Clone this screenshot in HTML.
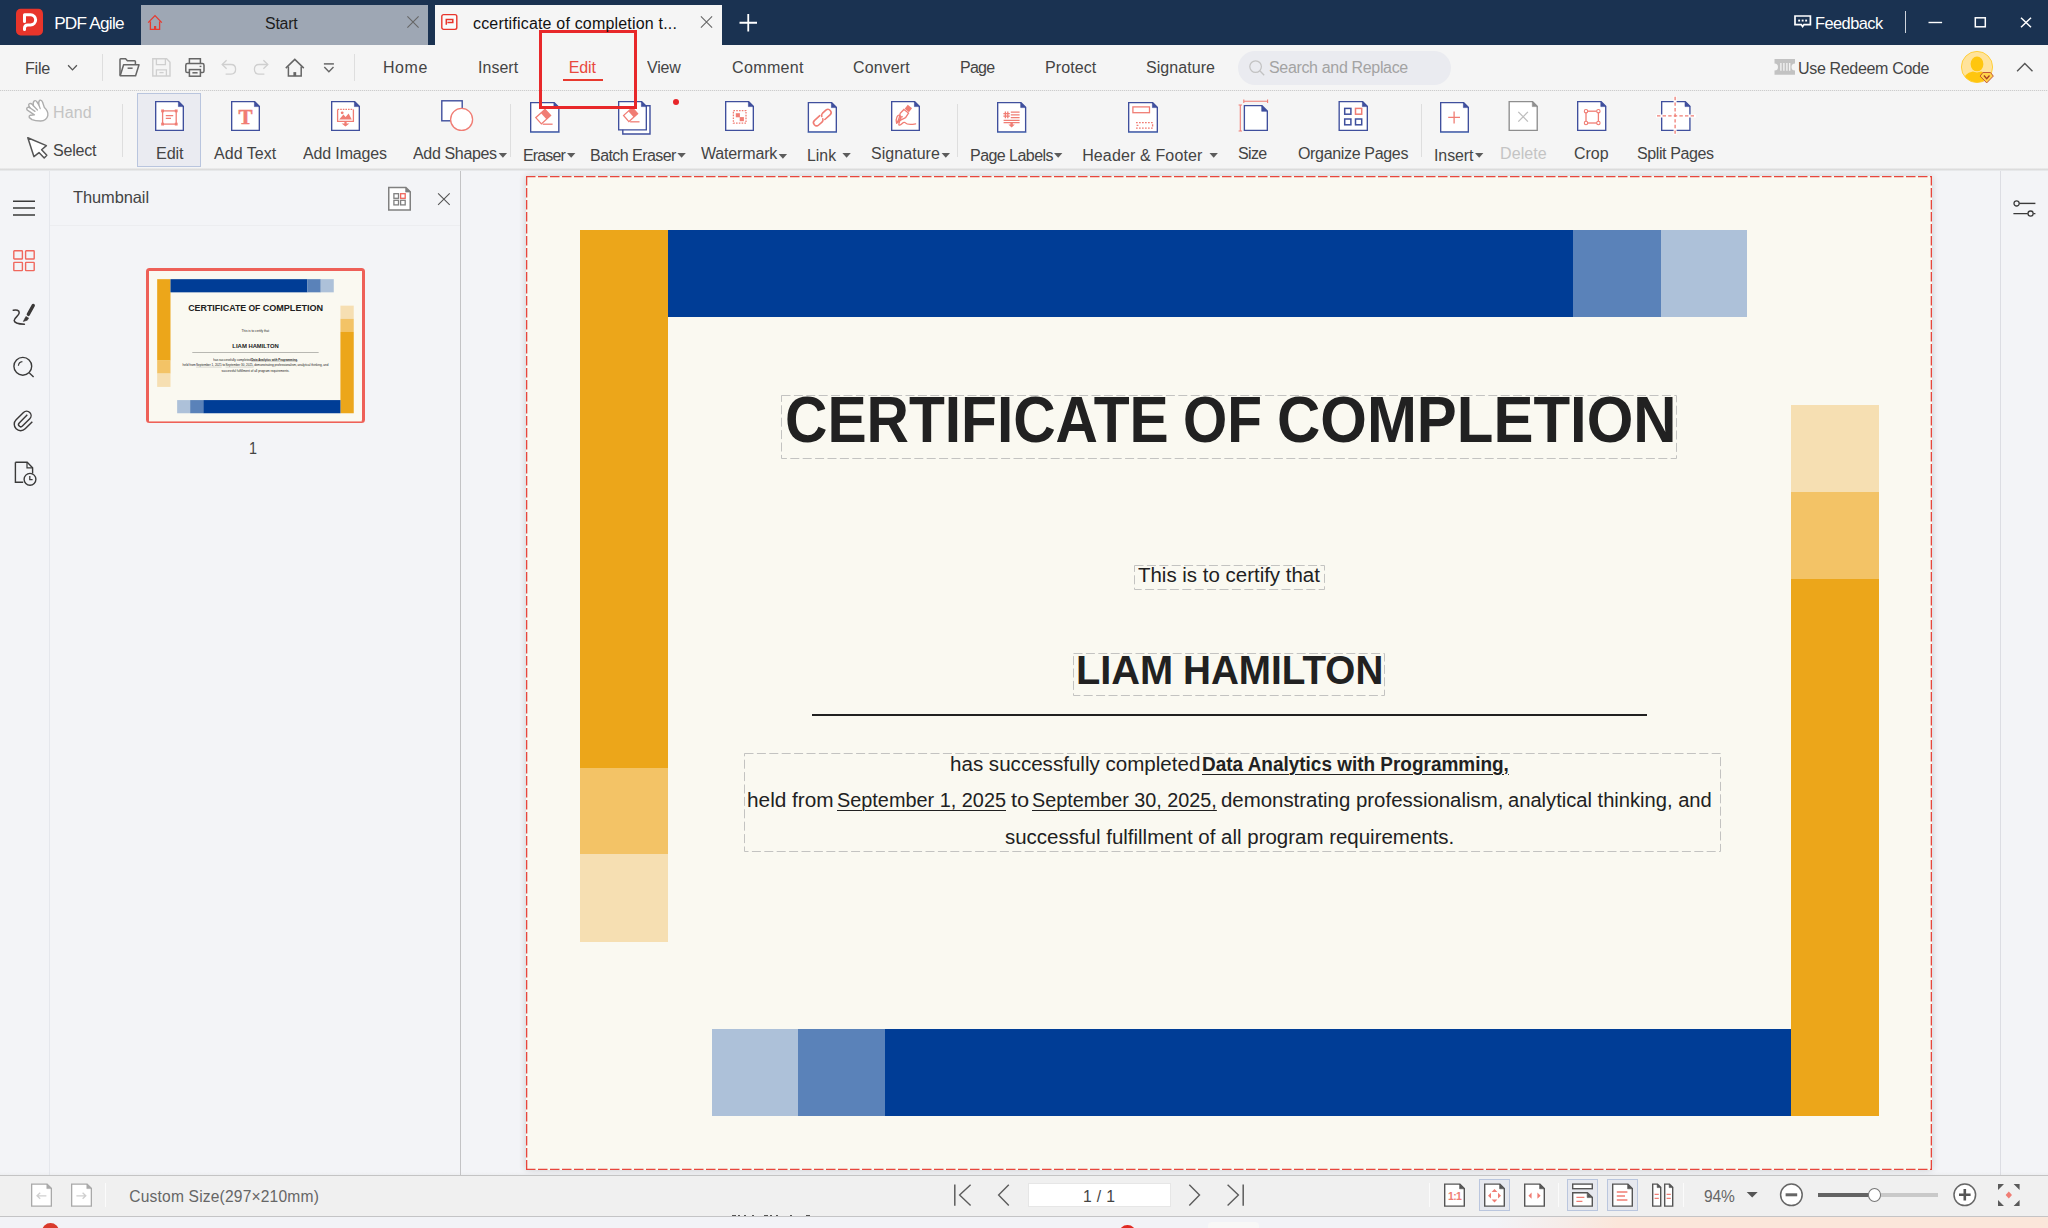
<!DOCTYPE html><html><head><meta charset="utf-8"><title>PDF Agile</title><style>
*{box-sizing:border-box}
html,body{margin:0;padding:0}
body{width:2048px;height:1228px;overflow:hidden;position:relative;background:#f3f4f7;font-family:"Liberation Sans",sans-serif;}
.a{position:absolute}
.t{position:absolute;white-space:pre;transform-origin:0 0;font-family:"Liberation Sans",sans-serif}
.sep{position:absolute;width:1px;background:#dedede}
u{text-decoration-thickness:1px;text-underline-offset:2.5px}
.db{position:absolute;border:1px dashed #bfbfbf}
</style></head><body>
<div class="a" style="left:0;top:0;width:2048px;height:45px;background:#1a3251"></div>
<div class="a" style="left:141px;top:5px;width:287px;height:40px;background:#9ea7b4"></div>
<div class="a" style="left:435px;top:5px;width:287px;height:40px;background:#f5f5f5"></div>
<svg style="position:absolute;left:16px;top:8px;overflow:visible;" width="27" height="28"><g transform="translate(0,0.8)"><rect x="0" y="0" width="27" height="26.6" rx="4.6" fill="#e8352b"/><path d="M8.5,12.6 V6 H14.6 A5.05,5.05 0 0 1 14.6,16.1 H11.8 Q8.5,16.1 8.5,19.4 V20.6" fill="none" stroke="#fff" stroke-width="3" stroke-linecap="round" stroke-linejoin="round"/></g></svg>
<svg style="position:absolute;left:147px;top:14px;overflow:visible;" width="16" height="17"><path d="M1.2,8.6 L8,1.6 L14.8,8.6 M3.4,7.4 V15.4 H12.6 V7.4" fill="none" stroke="#e8392e" stroke-width="1.3" stroke-linejoin="miter"/><rect x="7" y="12" width="2.2" height="3" fill="#e8392e"/></svg>
<svg style="position:absolute;left:407px;top:16px;overflow:visible;" width="12" height="12"><path d="M0.4,0.4 L11.6,11.6 M11.6,0.4 L0.4,11.6" stroke="#666" stroke-width="1.1" fill="none"/></svg>
<svg style="position:absolute;left:700px;top:16px;overflow:visible;" width="13" height="12"><g transform="translate(0.5,0)"><path d="M0.4,0.4 L11.6,11.6 M11.6,0.4 L0.4,11.6" stroke="#666" stroke-width="1.1" fill="none"/></g></svg>
<svg style="position:absolute;left:441px;top:13px;overflow:visible;" width="17" height="18"><g transform="translate(0,0.8)"><rect x="0.8" y="0.8" width="15" height="14.8" rx="1.8" fill="#fafcfc" stroke="#e8352b" stroke-width="1.4"/><path d="M5.3,11 V5.7 H11.8 V8.7 H6.4" fill="none" stroke="#e8352b" stroke-width="1.5"/></g></svg>
<svg style="position:absolute;left:739px;top:14px;overflow:visible;" width="18" height="18"><g transform="translate(0.5,0)"><path d="M0,8.75 H17.5 M8.75,0 V17.5" stroke="#fff" stroke-width="1.8"/></g></svg>
<svg style="position:absolute;left:1794px;top:15px;overflow:visible;" width="18" height="14"><path d="M1,1 H16.4 V9.6 H10 L8.6,11.6 L7.2,9.6 H1 Z" fill="none" stroke="#fff" stroke-width="1.7" stroke-linejoin="miter"/><rect x="4.2" y="4.6" width="1.9" height="1.9" fill="#fff"/><rect x="7.7" y="4.6" width="1.9" height="1.9" fill="#fff"/><rect x="11.2" y="4.6" width="1.9" height="1.9" fill="#fff"/></svg>
<div class="a" style="left:1905px;top:11px;width:1px;height:22px;background:#cfd4dc"></div>
<svg style="position:absolute;left:1928px;top:21px;overflow:visible;" width="15" height="3"><g transform="translate(0.5,0.5)"><path d="M0,1 H13.6" stroke="#fff" stroke-width="1.4"/></g></svg>
<svg style="position:absolute;left:1974px;top:17px;overflow:visible;" width="13" height="11"><g transform="translate(0.5,0)"><rect x="0.8" y="0.8" width="10" height="9" fill="none" stroke="#fff" stroke-width="1.5"/></g></svg>
<svg style="position:absolute;left:2020px;top:17px;overflow:visible;" width="12" height="11"><g transform="translate(0.5,0.3)"><path d="M0.5,0.5 L10.5,10 M10.5,0.5 L0.5,10" stroke="#fff" stroke-width="1.5" fill="none"/></g></svg>
<div class="a" style="left:0;top:45px;width:2048px;height:45px;background:#f5f5f5"></div>
<div class="a" style="left:0;top:90px;width:2048px;height:1px;background:repeating-linear-gradient(90deg,#cdcdcd 0 1px,#ececec 1px 2px)"></div>
<div class="a" style="left:0;top:91px;width:2048px;height:77px;background:#f5f5f5"></div>
<div class="a" style="left:0;top:168px;width:2048px;height:3px;background:linear-gradient(#efefef,#dcdcdc 50%,#eceef1)"></div>
<svg style="position:absolute;left:67px;top:64px;overflow:visible;" width="11" height="7"><g transform="translate(0.5,0.5)"><path d="M0.6,0.8 L5,5.4 L9.4,0.8" fill="none" stroke="#555" stroke-width="1.3"/></g></svg>
<div class="sep" style="left:102px;top:54px;height:27px"></div>
<div class="sep" style="left:354px;top:54px;height:27px"></div>
<svg style="position:absolute;left:119px;top:58px;overflow:visible;" width="21" height="19"><path d="M1,17.6 V1.6 Q1,0.8 1.8,0.8 H6.6 L8.4,2.8 H15.6 Q16.4,2.8 16.4,3.6 V6.6" fill="none" stroke="#666" stroke-width="1.5"/><path d="M1.2,17.8 L4.6,6.8 H20 L16.6,17.8 Z" fill="none" stroke="#666" stroke-width="1.5" stroke-linejoin="round"/><path d="M8.6,10.2 H13.6" stroke="#666" stroke-width="1.5"/></svg>
<svg style="position:absolute;left:152px;top:58px;overflow:visible;" width="19" height="19"><path d="M0.8,0.8 H14.6 L18,4.2 V18 H0.8 Z" fill="none" stroke="#cfcfcf" stroke-width="1.4"/><path d="M4.4,1 V6.6 H13.4 V1" fill="none" stroke="#cfcfcf" stroke-width="1.3"/><path d="M4.4,18 V11.8 H14.4 V18" fill="none" stroke="#cfcfcf" stroke-width="1.3"/><path d="M7.4,14.6 H11.6" stroke="#cfcfcf" stroke-width="1.3"/></svg>
<svg style="position:absolute;left:185px;top:58px;overflow:visible;" width="20" height="19"><path d="M4.4,5.4 V0.8 H15.4 V5.4" fill="none" stroke="#666" stroke-width="1.5"/><rect x="0.8" y="5.6" width="18.2" height="9" rx="1.6" fill="none" stroke="#666" stroke-width="1.5"/><rect x="4.4" y="11.6" width="11" height="6.6" fill="#f5f5f5" stroke="#666" stroke-width="1.5"/><path d="M7.4,14.8 H12.6" stroke="#666" stroke-width="1.5"/><path d="M14.6,8.4 H16.4" stroke="#666" stroke-width="1.4"/></svg>
<svg style="position:absolute;left:221px;top:59px;overflow:visible;" width="16" height="17"><g transform="translate(0,0.5)"><path d="M5.6,0.8 L1.2,5 L5.6,9.2" fill="none" stroke="#cfcfcf" stroke-width="1.3"/><path d="M1.6,5 H10 Q14.6,5 14.6,9.8 Q14.6,14.6 10,14.6 H4.6" fill="none" stroke="#cfcfcf" stroke-width="1.3"/></g></svg>
<svg style="position:absolute;left:253px;top:59px;overflow:visible;" width="16" height="17"><g transform="translate(0,0.5)"><path d="M10.4,0.8 L14.8,5 L10.4,9.2" fill="none" stroke="#cfcfcf" stroke-width="1.3"/><path d="M14.4,5 H6 Q1.4,5 1.4,9.8 Q1.4,14.6 6,14.6 H11.4" fill="none" stroke="#cfcfcf" stroke-width="1.3"/></g></svg>
<svg style="position:absolute;left:285px;top:58px;overflow:visible;" width="20" height="19"><g transform="translate(0,0.5)"><path d="M0.8,9.6 L9.8,0.9 L18.8,9.6" fill="none" stroke="#666" stroke-width="1.5" stroke-linejoin="miter"/><path d="M3.4,8 V17.6 H16.2 V8" fill="none" stroke="#666" stroke-width="1.5"/><rect x="8.4" y="13.6" width="2.8" height="4" fill="#666"/></g></svg>
<svg style="position:absolute;left:323px;top:63px;overflow:visible;" width="12" height="10"><g transform="translate(0.5,0)"><path d="M0.4,0.9 H10.4" stroke="#666" stroke-width="1.5"/><path d="M0.8,4 L5.4,8.8 L10,4" fill="none" stroke="#666" stroke-width="1.4"/></g></svg>
<div class="a" style="left:563px;top:78.5px;width:40px;height:2.6px;background:#e8392e"></div>
<div class="a" style="left:1238px;top:50.5px;width:213px;height:34px;border-radius:17px;background:#eaebf0"></div>
<svg style="position:absolute;left:1249px;top:60px;overflow:visible;" width="16" height="16"><circle cx="6.6" cy="6.6" r="5.8" fill="none" stroke="#c2c2c2" stroke-width="1.2"/><path d="M10.8,10.8 L15.2,15.2" stroke="#c2c2c2" stroke-width="1.3"/></svg>
<svg style="position:absolute;left:1774px;top:59px;overflow:visible;" width="21" height="16"><g transform="translate(0.5,0)"><path d="M0,0 H20.5 V4.4 A3.5,3.5 0 0 0 20.5,11.4 V15.8 H0 V11.4 A3.5,3.5 0 0 0 0,4.4 Z" fill="#c2c2c2"/><path d="M6.4,4 V11.8 M9.4,4 V11.8 M12.4,4 V11.8 M15.2,4 V11.8" stroke="#f5f5f5" stroke-width="1.3"/></g></svg>
<svg style="position:absolute;left:1960px;top:50px;overflow:visible;" width="34" height="34"><g transform="translate(0.5,0.5)"><circle cx="16.5" cy="16.5" r="15.6" fill="#ffe39b" stroke="#ffcf3d" stroke-width="1"/><clipPath id="av"><circle cx="16.5" cy="16.5" r="15.2"/></clipPath><g clip-path="url(#av)"><ellipse cx="16.5" cy="13.4" rx="6.4" ry="7.4" fill="#ffc60f"/><path d="M2,33 Q3,22.4 12.4,21 L16.5,22 L20.6,21 Q30,22.4 31,33 Z" fill="#ffc60f"/></g><path d="M19.6,25.6 L22.4,22 H30 L32.8,25.6 L26.2,32.4 Z" fill="#ffd24a" stroke="#c2573a" stroke-width="1"/><path d="M23.4,25 L26.2,28.2 L29,25" fill="none" stroke="#a83a22" stroke-width="1.3"/></g></svg>
<svg style="position:absolute;left:2016px;top:62px;overflow:visible;" width="18" height="10"><g transform="translate(0.5,0.5)"><path d="M0.6,8.8 L8.3,1 L16,8.8" fill="none" stroke="#555" stroke-width="1.4"/></g></svg>
<svg style="position:absolute;left:0px;top:92px;overflow:visible;" width="64" height="40"><path d="M29.4,25.6 Q28.6,23.8 30.6,23.2 L34.4,22.8 L27.4,18.2 Q26,16.6 27.4,15.6 Q28.6,14.8 30.2,16 L29.2,14.4 Q28,12.4 29.6,11.6 Q31,11 32.4,12.6 L33.4,13.8 Q32.6,10.2 34.4,8.8 Q36,8.2 37,10 L38.8,12.8 Q38.4,9 40,8.2 Q41.8,7.8 42.6,10.2 L44.4,15.6 Q48.6,19.6 47.8,23.6 Q46.6,28.6 40.6,29 Q35,29 32,27.6 Z" fill="#fff" stroke="#adadad" stroke-width="1.4" stroke-linejoin="round"/><path d="M30.2,16 L35,19.4 M33.4,13.8 L37.4,18 M38.8,12.8 L40.2,16.6" fill="none" stroke="#adadad" stroke-width="1.3" stroke-linecap="round"/></svg>
<svg style="position:absolute;left:0px;top:130px;overflow:visible;" width="64" height="34"><path d="M27.8,7.8 L46.4,15.6 L41.6,19.8 L46.8,25.2 L44.2,28 L39,22.6 L33.9,26.6 Z" fill="#fff" stroke="#555" stroke-width="1.5" stroke-linejoin="round"/></svg>
<div class="sep" style="left:122px;top:103.5px;height:53px"></div>
<div class="sep" style="left:510px;top:103.5px;height:53px"></div>
<div class="sep" style="left:957px;top:103.5px;height:53px"></div>
<div class="sep" style="left:1421px;top:103.5px;height:53px"></div>
<div class="a" style="left:137px;top:93px;width:64px;height:74px;background:#eaebf1;border:1px solid #b9c5de"></div>
<svg style="position:absolute;left:155px;top:101px;overflow:visible;" width="29" height="30"><path d="M0.675,0.675 H23.7 L28.325,5.3 V29.325 H0.675 Z" fill="#fff" stroke="#3f4f9d" stroke-width="1.35" stroke-linejoin="miter"/><path d="M23.4,0.675 L28.325,5.6 H23.4 Z" fill="#3f4f9d" stroke="#3f4f9d" stroke-width="0.6"/><rect x="7.6" y="9.9" width="13.6" height="13.2" fill="none" stroke="#f07d74" stroke-width="1.3"/><rect x="6.199999999999999" y="8.5" width="2.8" height="2.8" fill="#f07d74"/><rect x="6.199999999999999" y="21.700000000000003" width="2.8" height="2.8" fill="#f07d74"/><rect x="19.8" y="8.5" width="2.8" height="2.8" fill="#f07d74"/><rect x="19.8" y="21.700000000000003" width="2.8" height="2.8" fill="#f07d74"/><path d="M10.8,14.6 H18.2 M10.8,17.4 H16" fill="none" stroke="#f07d74" stroke-width="1.3"/></svg>
<svg style="position:absolute;left:231px;top:101px;overflow:visible;" width="29" height="30"><path d="M0.675,0.675 H23.7 L28.325,5.3 V29.325 H0.675 Z" fill="#fff" stroke="#3f4f9d" stroke-width="1.35" stroke-linejoin="miter"/><path d="M23.4,0.675 L28.325,5.6 H23.4 Z" fill="#3f4f9d" stroke="#3f4f9d" stroke-width="0.6"/><text x="14.4" y="22.6" text-anchor="middle" font-family="Liberation Serif, serif" font-weight="700" font-size="21" fill="#f07d74" stroke="#f07d74" stroke-width="0.5">T</text></svg>
<svg style="position:absolute;left:331px;top:101px;overflow:visible;" width="29" height="30"><path d="M0.675,0.675 H23.7 L28.325,5.3 V29.325 H0.675 Z" fill="#fff" stroke="#3f4f9d" stroke-width="1.35" stroke-linejoin="miter"/><path d="M23.4,0.675 L28.325,5.6 H23.4 Z" fill="#3f4f9d" stroke="#3f4f9d" stroke-width="0.6"/><path d="M6.6,8.4 V20.4 H22.4 V8.4" fill="none" stroke="#f07d74" stroke-width="1.3"/><path d="M6.6,8.4 H22.4" fill="none" stroke="#f07d74" stroke-width="1.3" stroke-dasharray="1.6 1"/><circle cx="11.2" cy="11.8" r="1.4" fill="#f07d74"/><path d="M8.2,18.6 L12.4,13.6 L14.6,16 L17.6,12.4 L20.8,18.6 Z" fill="#f07d74"/><path d="M13.4,20.4 H15.6 V22.4 H18.4 L14.5,25.6 L10.6,22.4 H13.4 Z" fill="#f07d74"/></svg>
<svg style="position:absolute;left:441px;top:100px;overflow:visible;" width="32" height="32"><rect x="0.8" y="0.8" width="20.4" height="20" fill="#fff" stroke="#3f4f9d" stroke-width="1.4"/><circle cx="20.6" cy="19.4" r="11" fill="#fff" stroke="#f07d74" stroke-width="1.3"/></svg>
<svg style="position:absolute;left:530px;top:102px;overflow:visible;" width="30" height="31"><path d="M0.675,0.675 H24.2 L28.825,5.3 V29.825 H0.675 Z" fill="#fff" stroke="#3f4f9d" stroke-width="1.35" stroke-linejoin="miter"/><path d="M23.9,0.675 L28.825,5.6 H23.9 Z" fill="#3f4f9d" stroke="#3f4f9d" stroke-width="0.6"/><path d="M0,30.3 H29.5" stroke="#4f74b8" stroke-width="1" opacity=".8"/><g transform="translate(13.2,14.6) scale(1.0) rotate(-42)"><rect x="-6.2" y="-4.2" width="12.4" height="8.4" fill="none" stroke="#f07d74" stroke-width="1.3"/><rect x="0.6" y="-4.2" width="5.6" height="8.4" fill="#f07d74"/></g><path d="M12.7,22.2 H22.6" fill="none" stroke="#f07d74" stroke-width="1.3"/></svg>
<svg style="position:absolute;left:622px;top:105px;overflow:visible;" width="29" height="30"><path d="M0.8,0.8 H28 V29 H0.8 Z" fill="#fff" stroke="#3f4f9d" stroke-width="1.4"/></svg>
<svg style="position:absolute;left:618px;top:101px;overflow:visible;" width="29" height="30"><path d="M0.675,0.675 H23.7 L28.325,5.3 V28.825 H0.675 Z" fill="#fff" stroke="#3f4f9d" stroke-width="1.35" stroke-linejoin="miter"/><path d="M23.4,0.675 L28.325,5.6 H23.4 Z" fill="#3f4f9d" stroke="#3f4f9d" stroke-width="0.6"/><g transform="translate(12.6,13.6) scale(0.95) rotate(-42)"><rect x="-6.2" y="-4.2" width="12.4" height="8.4" fill="none" stroke="#f07d74" stroke-width="1.3"/><rect x="0.6" y="-4.2" width="5.6" height="8.4" fill="#f07d74"/></g><path d="M12.125,20.82 H21.53" fill="none" stroke="#f07d74" stroke-width="1.3"/></svg>
<svg style="position:absolute;left:725px;top:101px;overflow:visible;" width="29" height="30"><path d="M0.675,0.675 H23.7 L28.325,5.3 V29.325 H0.675 Z" fill="#fff" stroke="#3f4f9d" stroke-width="1.35" stroke-linejoin="miter"/><path d="M23.4,0.675 L28.325,5.6 H23.4 Z" fill="#3f4f9d" stroke="#3f4f9d" stroke-width="0.6"/><rect x="8.4" y="9.6" width="12.6" height="12.6" fill="none" stroke="#f07d74" stroke-width="1.3" stroke-dasharray="1.6 1.2"/><rect x="10.8" y="12.2" width="4.1" height="4.1" fill="#f07d74"/><rect x="14.7" y="16.1" width="4.2" height="4.1" fill="#f07d74"/></svg>
<svg style="position:absolute;left:807px;top:102px;overflow:visible;" width="30" height="31"><g transform="translate(0.7,0)"><path d="M0.675,0.675 H24.0 L28.625,5.3 V29.825 H0.675 Z" fill="#fff" stroke="#3f4f9d" stroke-width="1.35" stroke-linejoin="miter"/><path d="M23.7,0.675 L28.625,5.6 H23.7 Z" fill="#3f4f9d" stroke="#3f4f9d" stroke-width="0.6"/><path d="M0,30.3 H29.3" stroke="#4f74b8" stroke-width="1" opacity=".8"/><g transform="translate(14.6,15.6) rotate(-42)"><path d="M-0.6,-3.1 H-7.6 A3.1,3.1 0 0 0 -7.6,3.1 H-3.2 A3.1,3.1 0 0 0 -0.4,1.2" fill="none" stroke="#f07d74" stroke-width="1.6" stroke-linecap="round"/><path d="M0.6,3.1 H7.6 A3.1,3.1 0 0 0 7.6,-3.1 H3.2 A3.1,3.1 0 0 0 0.4,-1.2" fill="none" stroke="#f07d74" stroke-width="1.6" stroke-linecap="round"/></g></g></svg>
<svg style="position:absolute;left:891px;top:101px;overflow:visible;" width="29" height="30"><path d="M0.675,0.675 H23.7 L28.325,5.3 V29.325 H0.675 Z" fill="#fff" stroke="#3f4f9d" stroke-width="1.35" stroke-linejoin="miter"/><path d="M23.4,0.675 L28.325,5.6 H23.4 Z" fill="#3f4f9d" stroke="#3f4f9d" stroke-width="0.6"/><g transform="translate(16.2,9) rotate(38)"><rect x="-2.7" y="-4.4" width="5.4" height="5" fill="#f07d74"/><path d="M-2.9,1.6 H2.9 L3.4,7 Q0.6,12 0,16.5 Q-0.6,12 -3.4,7 Z" fill="none" stroke="#f07d74" stroke-width="1.3" stroke-width="1.1"/><path d="M0,16 V9.5" fill="none" stroke="#f07d74" stroke-width="1.3" stroke-width="1"/><circle cx="0" cy="8.6" r="0.9" fill="#f07d74"/></g><path d="M5.6,22.4 C4,18 7,12.5 9,14.5 C11,17 6,24.5 8.6,24.2 C11,24 12,20 14,21.6 C15.6,23.4 20,23.8 24.6,22.8" fill="none" stroke="#f07d74" stroke-width="1.3" stroke-width="1.1" stroke-linecap="round"/></svg>
<svg style="position:absolute;left:997px;top:102px;overflow:visible;" width="30" height="31"><path d="M0.675,0.675 H24.0 L28.625,5.3 V29.825 H0.675 Z" fill="#fff" stroke="#3f4f9d" stroke-width="1.35" stroke-linejoin="miter"/><path d="M23.7,0.675 L28.625,5.6 H23.7 Z" fill="#3f4f9d" stroke="#3f4f9d" stroke-width="0.6"/><path d="M0,30.3 H29.3" stroke="#4f74b8" stroke-width="1" opacity=".8"/><path d="M6.4,11.6 H12.8 M6.4,14.2 H12.8 M8.4,9.6 V16.2 M10.8,9.6 V16.2" fill="none" stroke="#f07d74" stroke-width="1.3" stroke-width="1.2"/><path d="M13.8,10.1 H22.6 M13.8,12.9 H22.6 M13.8,15.6 H22.6 M6.6,18.3 H22.6 M6.6,20.7 H22.6" fill="none" stroke="#f07d74" stroke-width="1.3" stroke-width="1.2"/><path d="M13.4,21 H15.8 V22.4 H17.8 L14.6,25.4 L11.4,22.4 H13.4 Z" fill="#f07d74"/></svg>
<svg style="position:absolute;left:1128px;top:102px;overflow:visible;" width="30" height="31"><path d="M0.675,0.675 H24.7 L29.325,5.3 V29.825 H0.675 Z" fill="#fff" stroke="#3f4f9d" stroke-width="1.35" stroke-linejoin="miter"/><path d="M24.4,0.675 L29.325,5.6 H24.4 Z" fill="#3f4f9d" stroke="#3f4f9d" stroke-width="0.6"/><path d="M0,30.3 H30" stroke="#4f74b8" stroke-width="1" opacity=".8"/><rect x="4.9" y="4.9" width="16.6" height="5.8" fill="none" stroke="#f07d74" stroke-width="1.3" stroke-width="1.4"/><path d="M8,20.6 H26 M8,26.1 H26" fill="none" stroke="#f07d74" stroke-width="1.3" stroke-width="1.3" stroke-dasharray="1.7 1.3"/><path d="M8.6,23.3 H10.4 M24.6,22.2 V24.6" fill="none" stroke="#f07d74" stroke-width="1.3" stroke-width="1.2"/></svg>
<svg style="position:absolute;left:1243px;top:105px;overflow:visible;" width="25" height="26"><g transform="translate(0.7,0)"><path d="M0.675,0.675 H18.3 L23.625,6.0 V25.325 H0.675 Z" fill="#fff" stroke="#3f4f9d" stroke-width="1.35" stroke-linejoin="miter"/><path d="M18.0,0.675 L23.625,6.3 H18.0 Z" fill="#3f4f9d" stroke="#3f4f9d" stroke-width="0.6"/></g></svg>
<svg style="position:absolute;left:1238px;top:99px;overflow:visible;" width="32" height="34"><path d="M5.8,2.3 H29.6 M5.8,0.6 V4 M29.6,0.6 V4" stroke="#f07d74" stroke-width="1.1" fill="none"/><path d="M2.3,6 V32 M0.6,6 H4 M0.6,32 H4" stroke="#f07d74" stroke-width="1.1" fill="none"/></svg>
<svg style="position:absolute;left:1338px;top:101px;overflow:visible;" width="30" height="30"><g transform="translate(0.5,0)"><path d="M0.675,0.675 H24.2 L28.825,5.3 V29.325 H0.675 Z" fill="#fff" stroke="#3f4f9d" stroke-width="1.35" stroke-linejoin="miter"/><path d="M23.9,0.675 L28.825,5.6 H23.9 Z" fill="#3f4f9d" stroke="#3f4f9d" stroke-width="0.6"/><rect x="6.2" y="7.4" width="6.2" height="5.8" fill="none" stroke="#3f4f9d" stroke-width="1.5"/><rect x="6.2" y="18" width="6.2" height="5.8" fill="none" stroke="#3f4f9d" stroke-width="1.5"/><rect x="17" y="18" width="6.2" height="5.8" fill="none" stroke="#3f4f9d" stroke-width="1.5"/><rect x="17" y="7.4" width="6.2" height="5.8" fill="none" stroke="#f07d74" stroke-width="1.5"/></g></svg>
<svg style="position:absolute;left:1440px;top:102px;overflow:visible;" width="29" height="31"><path d="M0.675,0.675 H23.7 L28.325,5.3 V29.825 H0.675 Z" fill="#fff" stroke="#3f4f9d" stroke-width="1.35" stroke-linejoin="miter"/><path d="M23.4,0.675 L28.325,5.6 H23.4 Z" fill="#3f4f9d" stroke="#3f4f9d" stroke-width="0.6"/><path d="M0,30.3 H29" stroke="#4f74b8" stroke-width="1" opacity=".8"/><path d="M8.2,15.4 H20 M14.1,9.4 V21.4" fill="none" stroke="#f07d74" stroke-width="1.3" stroke-width="1.4"/></svg>
<svg style="position:absolute;left:1508px;top:101px;overflow:visible;" width="30" height="30"><g transform="translate(0.5,0)"><path d="M0.675,0.675 H24.099999999999998 L28.724999999999998,5.3 V29.325 H0.675 Z" fill="#fff" stroke="#8e8e8e" stroke-width="1.35" stroke-linejoin="miter"/><path d="M23.799999999999997,0.675 L28.724999999999998,5.6 H23.799999999999997 Z" fill="#8e8e8e" stroke="#8e8e8e" stroke-width="0.6"/><path d="M9.8,10.9 L19.4,20.6 M19.4,10.9 L9.8,20.6" fill="none" stroke="#bdbdbd" stroke-width="1.3"/></g></svg>
<svg style="position:absolute;left:1577px;top:101px;overflow:visible;" width="30" height="30"><path d="M0.675,0.675 H24.099999999999998 L28.724999999999998,5.3 V29.325 H0.675 Z" fill="#fff" stroke="#3f4f9d" stroke-width="1.35" stroke-linejoin="miter"/><path d="M23.799999999999997,0.675 L28.724999999999998,5.6 H23.799999999999997 Z" fill="#3f4f9d" stroke="#3f4f9d" stroke-width="0.6"/><rect x="9" y="10.2" width="12.4" height="11.8" fill="none" stroke="#f07d74" stroke-width="1.3" stroke-width="1.4"/><circle cx="9" cy="10.2" r="1.7" fill="#fff" stroke="#f07d74" stroke-width="1.1"/><circle cx="9" cy="22" r="1.7" fill="#fff" stroke="#f07d74" stroke-width="1.1"/><circle cx="21.4" cy="10.2" r="1.7" fill="#fff" stroke="#f07d74" stroke-width="1.1"/><circle cx="21.4" cy="22" r="1.7" fill="#fff" stroke="#f07d74" stroke-width="1.1"/></svg>
<svg style="position:absolute;left:1661px;top:101px;overflow:visible;" width="30" height="30"><path d="M0.675,0.675 H24.3 L28.925,5.3 V29.325 H0.675 Z" fill="#fff" stroke="#3f4f9d" stroke-width="1.35" stroke-linejoin="miter"/><path d="M24.0,0.675 L28.925,5.6 H24.0 Z" fill="#3f4f9d" stroke="#3f4f9d" stroke-width="0.6"/></svg>
<svg style="position:absolute;left:1656px;top:96px;overflow:visible;" width="40" height="39"><path d="M17.6,0 H20.6 V39 H17.6 Z M0,18.4 H40 V21.4 H0 Z" fill="#fff"/><path d="M1,19.9 H39" stroke="#f07d74" stroke-width="1.3" stroke-dasharray="3.4 2.2" fill="none"/><path d="M19.1,0.8 V38" stroke="#f07d74" stroke-width="1.3" stroke-dasharray="3.4 2.2" fill="none"/></svg>
<svg style="position:absolute;left:498px;top:153px;overflow:visible;" width="10" height="5"><g transform="translate(0.7,0)"><path d="M0,0 H8.4 L4.2,4.8 Z" fill="#5c5c5c"/></g></svg>
<svg style="position:absolute;left:567px;top:153px;overflow:visible;" width="9" height="5"><path d="M0,0 H8.4 L4.2,4.8 Z" fill="#5c5c5c"/></svg>
<svg style="position:absolute;left:677px;top:153px;overflow:visible;" width="9" height="5"><g transform="translate(0.4,0)"><path d="M0,0 H8.4 L4.2,4.8 Z" fill="#5c5c5c"/></g></svg>
<svg style="position:absolute;left:778px;top:154px;overflow:visible;" width="10" height="5"><g transform="translate(0.7,0)"><path d="M0,0 H8.4 L4.2,4.8 Z" fill="#5c5c5c"/></g></svg>
<svg style="position:absolute;left:842px;top:153px;overflow:visible;" width="9" height="5"><g transform="translate(0.4,0)"><path d="M0,0 H8.4 L4.2,4.8 Z" fill="#5c5c5c"/></g></svg>
<svg style="position:absolute;left:941px;top:153px;overflow:visible;" width="9" height="5"><g transform="translate(0.6,0)"><path d="M0,0 H8.4 L4.2,4.8 Z" fill="#5c5c5c"/></g></svg>
<svg style="position:absolute;left:1054px;top:153px;overflow:visible;" width="9" height="5"><path d="M0,0 H8.4 L4.2,4.8 Z" fill="#5c5c5c"/></svg>
<svg style="position:absolute;left:1209px;top:153px;overflow:visible;" width="9" height="5"><g transform="translate(0.5,0)"><path d="M0,0 H8.4 L4.2,4.8 Z" fill="#5c5c5c"/></g></svg>
<svg style="position:absolute;left:1475px;top:153px;overflow:visible;" width="9" height="5"><path d="M0,0 H8.4 L4.2,4.8 Z" fill="#5c5c5c"/></svg>
<div class="a" style="left:673.2px;top:99px;width:6.2px;height:6.2px;border-radius:50%;background:#e8262a"></div>
<div class="a" style="left:49px;top:171px;width:1px;height:1004px;background:#e5e7ec"></div>
<div class="a" style="left:460px;top:171px;width:1px;height:1004px;background:#c3c3c5"></div>
<div class="a" style="left:50px;top:225px;width:410px;height:1px;background:#ecedf0"></div>
<div class="a" style="left:2000px;top:171px;width:1px;height:1004px;background:#dcdde3"></div>
<svg style="position:absolute;left:13px;top:200px;overflow:visible;" width="22" height="16"><path d="M0,1.2 H22 M0,8 H22 M0,14.9 H22" stroke="#3a3a3a" stroke-width="1.5"/></svg>
<svg style="position:absolute;left:13px;top:250px;overflow:visible;" width="22" height="22"><rect x="0.8" y="0.8" width="8.6" height="8.2" rx="0.6" fill="none" stroke="#f0675d" stroke-width="1.4"/><rect x="0.8" y="12.4" width="8.6" height="8.2" rx="0.6" fill="none" stroke="#f0675d" stroke-width="1.4"/><rect x="12.6" y="0.8" width="8.6" height="8.2" rx="0.6" fill="none" stroke="#f0675d" stroke-width="1.4"/><rect x="12.6" y="12.4" width="8.6" height="8.2" rx="0.6" fill="none" stroke="#f0675d" stroke-width="1.4"/></svg>
<svg style="position:absolute;left:0px;top:295px;overflow:visible;" width="45" height="40"><path d="M13.3,15.3 C16,14.4 19.5,15.2 19.2,18 C18.9,21 14.2,22.4 14.2,25.6 C14.4,28.4 19.5,29 24.4,29.3" fill="none" stroke="#3a3838" stroke-width="1.5" stroke-linecap="round"/><path d="M33.3,10.4 L28.3,19.4" stroke="#3a3838" stroke-width="3.3" stroke-linecap="round"/><path d="M25.9,21.5 L28.6,23 L27.3,25.2 L23.3,26.5 Z" fill="#3a3838" stroke="#3a3838" stroke-width="0.6" stroke-linejoin="round"/></svg>
<svg style="position:absolute;left:13px;top:356px;overflow:visible;" width="22" height="22"><g transform="translate(0,0.5)"><circle cx="9.8" cy="9.8" r="8.9" fill="none" stroke="#3a3a3a" stroke-width="1.4"/><path d="M16.4,16.4 L20.6,20.4" stroke="#3a3a3a" stroke-width="1.4"/><path d="M5.4,9.2 Q5.8,5.6 9.4,5.2" fill="none" stroke="#3a3a3a" stroke-width="1.2"/></g></svg>
<svg style="position:absolute;left:10px;top:405px;overflow:visible;" width="28" height="30"><g transform="translate(6.12,14.8) rotate(-45)"><path d="M10.1,12.8 H0 A6.4,6.4 0 0 1 0,0 H10.4 A4.45,4.45 0 0 1 10.4,8.9 H0 A2.25,2.25 0 0 1 0,4.4 H11.4" fill="none" stroke="#3a3838" stroke-width="1.45"/></g></svg>
<svg style="position:absolute;left:14px;top:461px;overflow:visible;" width="23" height="25"><g transform="translate(0.6,0.5)"><path d="M0.8,0.8 H12.6 L18,6.2 V12 M8.6,20.8 H0.8 V0.8" fill="none" stroke="#3a3a3a" stroke-width="1.4"/><path d="M12.4,1 V6.4 H17.8" fill="none" stroke="#3a3a3a" stroke-width="1.2"/><circle cx="15.4" cy="17.8" r="5.9" fill="#f3f4f7" stroke="#3a3a3a" stroke-width="1.4"/><path d="M15.2,14.6 V18.2 H18" fill="none" stroke="#3a3a3a" stroke-width="1.3"/></g></svg>
<svg style="position:absolute;left:388px;top:186px;overflow:visible;" width="23" height="25"><g transform="translate(0,0.7)"><path d="M0.75,0.75 H17.9 L22.25,5.1 V23.25 H0.75 Z" fill="#fff" stroke="#808080" stroke-width="1.5" stroke-linejoin="miter"/><path d="M17.599999999999998,0.75 L22.25,5.3999999999999995 H17.599999999999998 Z" fill="#808080" stroke="#808080" stroke-width="0.6"/><rect x="5.9" y="7" width="4.6" height="4.6" fill="none" stroke="#808080" stroke-width="1.3"/><rect x="12.6" y="7" width="4.6" height="4.6" fill="none" stroke="#f0675d" stroke-width="1.3"/><rect x="5.9" y="13.6" width="4.6" height="4.6" fill="none" stroke="#808080" stroke-width="1.3"/><rect x="12.6" y="13.6" width="4.6" height="4.6" fill="none" stroke="#808080" stroke-width="1.3"/></g></svg>
<svg style="position:absolute;left:437px;top:193px;overflow:visible;" width="13" height="13"><g transform="translate(0.8,0)"><path d="M0.3,0.3 L11.9,11.9 M11.9,0.3 L0.3,11.9" stroke="#555" stroke-width="1.1" fill="none"/></g></svg>
<svg style="position:absolute;left:2013px;top:200px;overflow:visible;" width="23" height="18"><circle cx="3.6" cy="3.4" r="2.6" fill="none" stroke="#3a3a3a" stroke-width="1.3"/><path d="M6.4,3.4 H22.4" stroke="#3a3a3a" stroke-width="1.4"/><circle cx="17.6" cy="13.6" r="2.6" fill="none" stroke="#3a3a3a" stroke-width="1.3"/><path d="M0.4,13.6 H14.8 M20.4,13.6 H22.4" stroke="#3a3a3a" stroke-width="1.4"/></svg>
<div class="a" style="left:526px;top:176px;width:1406px;height:994px;background:#faf9f1;box-shadow:0 0 7px rgba(0,0,0,.16);overflow:hidden"><div class="a" style="left:54.0px;top:54.0px;width:87.6px;height:537.8px;background:#eca61a"></div><div class="a" style="left:54.0px;top:591.8px;width:87.6px;height:86.2px;background:#f3c366"></div><div class="a" style="left:54.0px;top:678.0px;width:87.6px;height:87.5px;background:#f6dfb2"></div><div class="a" style="left:141.6px;top:54.0px;width:905.4px;height:87.2px;background:#003d96"></div><div class="a" style="left:1047.0px;top:54.0px;width:87.8px;height:87.2px;background:#5a82b9"></div><div class="a" style="left:1134.8px;top:54.0px;width:86.2px;height:87.2px;background:#adc1d9"></div><div class="a" style="left:1265.0px;top:229.0px;width:87.7px;height:86.7px;background:#f6dfb2"></div><div class="a" style="left:1265.0px;top:315.7px;width:87.7px;height:86.9px;background:#f3c366"></div><div class="a" style="left:1265.0px;top:402.6px;width:87.7px;height:537.5px;background:#eca61a"></div><div class="a" style="left:185.6px;top:853.0px;width:86.6px;height:87.1px;background:#adc1d9"></div><div class="a" style="left:272.2px;top:853.0px;width:87.0px;height:87.1px;background:#5a82b9"></div><div class="a" style="left:359.2px;top:853.0px;width:905.8px;height:87.1px;background:#003d96"></div><div class="a" style="left:286.2px;top:537.9px;width:834.8px;height:2.2px;background:#212121"></div><div class="t" style="left:258.66px;top:203.10px;font-size:65.5px;line-height:82px;color:#212121;font-weight:700;transform:scaleX(0.8960);">CERTIFICATE</div><div class="t" style="left:657.34px;top:203.10px;font-size:65.5px;line-height:82px;color:#212121;font-weight:700;transform:scaleX(0.8678);">OF</div><div class="t" style="left:751.11px;top:203.10px;font-size:65.5px;line-height:82px;color:#212121;font-weight:700;transform:scaleX(0.9150);">COMPLETION</div><div class="t" style="left:612.40px;top:387.30px;font-size:20px;line-height:25px;color:#212121;transform:scaleX(1.0228);">This is to certify that</div><div class="t" style="left:549.64px;top:468.60px;font-size:40.5px;line-height:51px;color:#212121;font-weight:700;transform:scaleX(0.9828);">LIAM</div><div class="t" style="left:656.69px;top:468.60px;font-size:40.5px;line-height:51px;color:#212121;font-weight:700;transform:scaleX(0.9538);">HAMILTON</div><div class="t" style="left:423.63px;top:575.60px;font-size:20px;line-height:25px;color:#212121;transform:scaleX(1.0283);">has successfully completed</div><div class="t" style="left:676.27px;top:575.60px;font-size:20px;line-height:25px;color:#212121;transform:scaleX(0.9477);"><b><u>Data Analytics with Programming,</u></b></div><div class="t" style="left:221.12px;top:612.10px;font-size:20px;line-height:25px;color:#212121;transform:scaleX(1.0397);">held from</div><div class="t" style="left:311.34px;top:612.10px;font-size:20px;line-height:25px;color:#212121;transform:scaleX(0.9933);"><u>September 1, 2025</u></div><div class="t" style="left:484.92px;top:612.10px;font-size:20px;line-height:25px;color:#212121;transform:scaleX(1.0889);">to</div><div class="t" style="left:506.44px;top:612.10px;font-size:20px;line-height:25px;color:#212121;transform:scaleX(0.9896);"><u>September 30, 2025,</u></div><div class="t" style="left:694.92px;top:612.10px;font-size:20px;line-height:25px;color:#212121;transform:scaleX(1.0202);">demonstrating professionalism,</div><div class="t" style="left:981.62px;top:612.10px;font-size:20px;line-height:25px;color:#212121;transform:scaleX(1.0069);">analytical thinking, and</div><div class="t" style="left:478.75px;top:648.60px;font-size:20px;line-height:25px;color:#212121;transform:scaleX(1.0232);">successful fulfillment of all program requirements.</div><svg class="a" style="left:255px;top:219px;overflow:visible" width="896" height="64"><rect x="0.5" y="0.5" width="895" height="63" fill="none" stroke="#c3c3c1" stroke-width="1" stroke-dasharray="9 3.4"/></svg><svg class="a" style="left:608px;top:389px;overflow:visible" width="191" height="25"><rect x="0.5" y="0.5" width="190" height="24" fill="none" stroke="#c3c3c1" stroke-width="1" stroke-dasharray="9 3.4"/></svg><svg class="a" style="left:547px;top:477px;overflow:visible" width="312" height="43"><rect x="0.5" y="0.5" width="311" height="42" fill="none" stroke="#c3c3c1" stroke-width="1" stroke-dasharray="9 3.4"/></svg><svg class="a" style="left:218px;top:577px;overflow:visible" width="977" height="99"><rect x="0.5" y="0.5" width="976" height="98" fill="none" stroke="#c3c3c1" stroke-width="1" stroke-dasharray="9 3.4"/></svg></div>
<svg style="position:absolute;left:526px;top:176px;overflow:visible;" width="1406" height="994"><path d="M0,0.65 H1406 M0.65,0 V994 M0,993.35 H1406 M1405.35,0 V994" fill="none" stroke="#e8463c" stroke-width="1.3" stroke-dasharray="9.5 2.5"/></svg>
<div class="a" style="left:146.4px;top:267.5px;width:218.2px;height:155.9px;border:3px solid #ee6058;border-radius:3.5px;background:#faf9f1"></div>
<div class="a" style="left:149.0px;top:270.75px;width:1406px;height:994px;transform-origin:0 0;transform:scale(0.15133);overflow:hidden;background:#faf9f1"><div class="a" style="left:54.0px;top:54.0px;width:87.6px;height:537.8px;background:#eca61a"></div><div class="a" style="left:54.0px;top:591.8px;width:87.6px;height:86.2px;background:#f3c366"></div><div class="a" style="left:54.0px;top:678.0px;width:87.6px;height:87.5px;background:#f6dfb2"></div><div class="a" style="left:141.6px;top:54.0px;width:905.4px;height:87.2px;background:#003d96"></div><div class="a" style="left:1047.0px;top:54.0px;width:87.8px;height:87.2px;background:#5a82b9"></div><div class="a" style="left:1134.8px;top:54.0px;width:86.2px;height:87.2px;background:#adc1d9"></div><div class="a" style="left:1265.0px;top:229.0px;width:87.7px;height:86.7px;background:#f6dfb2"></div><div class="a" style="left:1265.0px;top:315.7px;width:87.7px;height:86.9px;background:#f3c366"></div><div class="a" style="left:1265.0px;top:402.6px;width:87.7px;height:537.5px;background:#eca61a"></div><div class="a" style="left:185.6px;top:853.0px;width:86.6px;height:87.1px;background:#adc1d9"></div><div class="a" style="left:272.2px;top:853.0px;width:87.0px;height:87.1px;background:#5a82b9"></div><div class="a" style="left:359.2px;top:853.0px;width:905.8px;height:87.1px;background:#003d96"></div><div class="a" style="left:286.2px;top:537.9px;width:834.8px;height:2.2px;background:#212121"></div><div class="t" style="left:258.66px;top:203.10px;font-size:65.5px;line-height:82px;color:#212121;font-weight:700;transform:scaleX(0.8960);">CERTIFICATE</div><div class="t" style="left:657.34px;top:203.10px;font-size:65.5px;line-height:82px;color:#212121;font-weight:700;transform:scaleX(0.8678);">OF</div><div class="t" style="left:751.11px;top:203.10px;font-size:65.5px;line-height:82px;color:#212121;font-weight:700;transform:scaleX(0.9150);">COMPLETION</div><div class="t" style="left:612.40px;top:387.30px;font-size:20px;line-height:25px;color:#212121;transform:scaleX(1.0228);">This is to certify that</div><div class="t" style="left:549.64px;top:468.60px;font-size:40.5px;line-height:51px;color:#212121;font-weight:700;transform:scaleX(0.9828);">LIAM</div><div class="t" style="left:656.69px;top:468.60px;font-size:40.5px;line-height:51px;color:#212121;font-weight:700;transform:scaleX(0.9538);">HAMILTON</div><div class="t" style="left:423.63px;top:575.60px;font-size:20px;line-height:25px;color:#212121;transform:scaleX(1.0283);">has successfully completed</div><div class="t" style="left:676.27px;top:575.60px;font-size:20px;line-height:25px;color:#212121;transform:scaleX(0.9477);"><b><u>Data Analytics with Programming,</u></b></div><div class="t" style="left:221.12px;top:612.10px;font-size:20px;line-height:25px;color:#212121;transform:scaleX(1.0397);">held from</div><div class="t" style="left:311.34px;top:612.10px;font-size:20px;line-height:25px;color:#212121;transform:scaleX(0.9933);"><u>September 1, 2025</u></div><div class="t" style="left:484.92px;top:612.10px;font-size:20px;line-height:25px;color:#212121;transform:scaleX(1.0889);">to</div><div class="t" style="left:506.44px;top:612.10px;font-size:20px;line-height:25px;color:#212121;transform:scaleX(0.9896);"><u>September 30, 2025,</u></div><div class="t" style="left:694.92px;top:612.10px;font-size:20px;line-height:25px;color:#212121;transform:scaleX(1.0202);">demonstrating professionalism,</div><div class="t" style="left:981.62px;top:612.10px;font-size:20px;line-height:25px;color:#212121;transform:scaleX(1.0069);">analytical thinking, and</div><div class="t" style="left:478.75px;top:648.60px;font-size:20px;line-height:25px;color:#212121;transform:scaleX(1.0232);">successful fulfillment of all program requirements.</div></div>
<div class="a" style="left:539.2px;top:30px;width:98.2px;height:78.6px;border:3.4px solid #e8282a"></div>
<div class="a" style="left:0;top:1172px;width:2048px;height:3px;background:linear-gradient(rgba(200,200,200,0),rgba(190,190,190,.12))"></div>
<div class="a" style="left:0;top:1175px;width:2048px;height:1px;background:#c4c4c4"></div>
<div class="a" style="left:0;top:1176px;width:2048px;height:40px;background:#f0f0f0"></div>
<div class="a" style="left:0;top:1216px;width:2048px;height:1px;background:#c4c4c6"></div>
<div class="a" style="left:0;top:1217px;width:2048px;height:11px;background:linear-gradient(90deg,#f2f3f7 0,#f2f3f7 73%,#f6ece8 76.5%,#fbe6da 79%,#fbe6da 100%)"></div>
<div class="a" style="left:42px;top:1223.4px;width:17.4px;height:17.4px;border-radius:50%;background:#d93a2c"></div>
<div class="a" style="left:1119px;top:1224.8px;width:16.8px;height:16.8px;border-radius:50%;background:#e02a22"></div>
<div class="a" style="left:1208px;top:1221.8px;width:50.5px;height:12px;border-radius:4px;background:#f8f8f7"></div>
<div class="a" style="left:732px;top:1214.6px;width:4px;height:1.6px;background:#555"></div><div class="a" style="left:738px;top:1214.6px;width:2px;height:1.6px;background:#555"></div><div class="a" style="left:744px;top:1214.6px;width:2px;height:1.6px;background:#555"></div><div class="a" style="left:752px;top:1214.6px;width:1.5px;height:1.6px;background:#555"></div><div class="a" style="left:764px;top:1214.6px;width:4px;height:1.6px;background:#555"></div><div class="a" style="left:770px;top:1214.6px;width:1.5px;height:1.6px;background:#555"></div><div class="a" style="left:776px;top:1214.6px;width:2px;height:1.6px;background:#555"></div><div class="a" style="left:790px;top:1214.6px;width:1.5px;height:1.6px;background:#555"></div><div class="a" style="left:806px;top:1214.6px;width:4px;height:1.6px;background:#555"></div>
<svg style="position:absolute;left:31px;top:1183px;overflow:visible;" width="21" height="24"><g transform="translate(0,0.4)"><path d="M0.65,0.65 H16.1 L20.35,4.9 V22.75 H0.65 Z" fill="#fff" stroke="#a9a9a9" stroke-width="1.3" stroke-linejoin="miter"/><path d="M15.8,0.65 L20.35,5.2 H15.8 Z" fill="#a9a9a9" stroke="#a9a9a9" stroke-width="0.6"/><path d="M15.4,12.4 H6 M9.2,9.4 L6,12.4 L9.2,15.4" fill="none" stroke="#cfcfcf" stroke-width="1.3"/></g></svg>
<svg style="position:absolute;left:71px;top:1183px;overflow:visible;" width="21" height="24"><g transform="translate(0,0.4)"><path d="M0.65,0.65 H16.1 L20.35,4.9 V22.75 H0.65 Z" fill="#fff" stroke="#a9a9a9" stroke-width="1.3" stroke-linejoin="miter"/><path d="M15.8,0.65 L20.35,5.2 H15.8 Z" fill="#a9a9a9" stroke="#a9a9a9" stroke-width="0.6"/><path d="M5.4,12.4 H14.8 M11.6,9.4 L14.8,12.4 L11.6,15.4" fill="none" stroke="#cfcfcf" stroke-width="1.3"/></g></svg>
<div class="a" style="left:104.5px;top:1183px;width:1px;height:24px;background:#fbfbfb"></div>
<div class="a" style="left:1429px;top:1183px;width:1px;height:24px;background:#fbfbfb"></div>
<div class="a" style="left:1557.5px;top:1183px;width:1px;height:24px;background:#fbfbfb"></div>
<div class="a" style="left:1682.7px;top:1183px;width:1px;height:24px;background:#fbfbfb"></div>
<svg style="position:absolute;left:954px;top:1184px;overflow:visible;" width="18" height="22"><g transform="translate(0,0.4)"><path d="M0.8,0 V21.4" stroke="#5c5c5c" stroke-width="1.5"/><path d="M16.6,0.4 L5.6,10.7 L16.6,21" fill="none" stroke="#5c5c5c" stroke-width="1.4"/></g></svg>
<svg style="position:absolute;left:997px;top:1184px;overflow:visible;" width="13" height="22"><g transform="translate(0.6,0.4)"><path d="M11.2,0.4 L1,10.7 L11.2,21" fill="none" stroke="#5c5c5c" stroke-width="1.4"/></g></svg>
<div class="a" style="left:1027.5px;top:1183.3px;width:143px;height:24px;background:#fff;border:1px solid #e6e6e6"></div>
<svg style="position:absolute;left:1188px;top:1184px;overflow:visible;" width="13" height="22"><g transform="translate(0.5,0.4)"><path d="M0.8,0.4 L11,10.7 L0.8,21" fill="none" stroke="#5c5c5c" stroke-width="1.4"/></g></svg>
<svg style="position:absolute;left:1227px;top:1184px;overflow:visible;" width="18" height="22"><g transform="translate(0,0.4)"><path d="M16.2,0 V21.4" stroke="#5c5c5c" stroke-width="1.5"/><path d="M0.6,0.4 L11.4,10.7 L0.6,21" fill="none" stroke="#5c5c5c" stroke-width="1.4"/></g></svg>
<div class="a" style="left:1478.8px;top:1179.3px;width:31.2px;height:31.4px;background:#e6e8ee;border:1px solid #bac6de"></div>
<div class="a" style="left:1567px;top:1179.3px;width:31.2px;height:31.4px;background:#e6e8ee;border:1px solid #bac6de"></div>
<div class="a" style="left:1606.8px;top:1179.3px;width:31.2px;height:31.4px;background:#e6e8ee;border:1px solid #bac6de"></div>
<svg style="position:absolute;left:1444px;top:1183px;overflow:visible;" width="21" height="24"><g transform="translate(0,0.4)"><path d="M0.7,0.7 H15.899999999999999 L20.3,5.1 V22.7 H0.7 Z" fill="#fff" stroke="#555" stroke-width="1.4" stroke-linejoin="miter"/><path d="M15.599999999999998,0.7 L20.3,5.3999999999999995 H15.599999999999998 Z" fill="#555" stroke="#555" stroke-width="0.6"/><text x="10.6" y="17" text-anchor="middle" font-family="Liberation Sans, sans-serif" font-weight="700" font-size="10.5" letter-spacing="-0.6" fill="#f07d74">1:1</text></g></svg>
<svg style="position:absolute;left:1484px;top:1183px;overflow:visible;" width="21" height="24"><g transform="translate(0,0.4)"><path d="M0.7,0.7 H15.899999999999999 L20.3,5.1 V22.7 H0.7 Z" fill="#fff" stroke="#555" stroke-width="1.4" stroke-linejoin="miter"/><path d="M15.599999999999998,0.7 L20.3,5.3999999999999995 H15.599999999999998 Z" fill="#555" stroke="#555" stroke-width="0.6"/><path d="M10.5,5.6 L13.4,8.6 H7.6 Z M10.5,19 L13.4,16 H7.6 Z M4,12.3 L7,9.4 V15.2 Z M17,12.3 L14,9.4 V15.2 Z" fill="#f07d74"/></g></svg>
<svg style="position:absolute;left:1524px;top:1183px;overflow:visible;" width="21" height="24"><g transform="translate(0,0.4)"><path d="M0.7,0.7 H15.899999999999999 L20.3,5.1 V22.7 H0.7 Z" fill="#fff" stroke="#555" stroke-width="1.4" stroke-linejoin="miter"/><path d="M15.599999999999998,0.7 L20.3,5.3999999999999995 H15.599999999999998 Z" fill="#555" stroke="#555" stroke-width="0.6"/><path d="M4.4,12.3 L7.6,9.2 V15.4 Z M16.6,12.3 L13.4,9.2 V15.4 Z" fill="#f07d74"/></g></svg>
<svg style="position:absolute;left:1572px;top:1183px;overflow:visible;" width="21" height="24"><g transform="translate(0,0.4)"><rect x="0.7" y="0.7" width="19.6" height="4.6" fill="#fff" stroke="#555" stroke-width="1.4"/><path d="M0.7,22.7 V9.4 H15.4 L20.3,14 V22.7 Z" fill="#fff" stroke="#555" stroke-width="1.4"/><path d="M15.2,9.6 V14.2 H20" fill="#555" stroke="#555" stroke-width="0.6"/><path d="M4.4,14 H12.4 M4.4,18 H10.4" stroke="#f07d74" stroke-width="1.4"/></g></svg>
<svg style="position:absolute;left:1612px;top:1183px;overflow:visible;" width="21" height="24"><g transform="translate(0,0.4)"><path d="M0.7,0.7 H15.899999999999999 L20.3,5.1 V22.7 H0.7 Z" fill="#fff" stroke="#555" stroke-width="1.4" stroke-linejoin="miter"/><path d="M15.599999999999998,0.7 L20.3,5.3999999999999995 H15.599999999999998 Z" fill="#555" stroke="#555" stroke-width="0.6"/><path d="M4.8,8.6 H15.4 M4.8,12.6 H13 M4.8,16.6 H15.4" stroke="#f07d74" stroke-width="1.4"/></g></svg>
<svg style="position:absolute;left:1652px;top:1183px;overflow:visible;" width="22" height="24"><g transform="translate(0,0.4)"><path d="M0.7,0.7 H5.5 L8.700000000000001,3.9 V22.7 H0.7 Z" fill="#fff" stroke="#555" stroke-width="1.4" stroke-linejoin="miter"/><path d="M5.2,0.7 L8.700000000000001,4.2 H5.2 Z" fill="#555" stroke="#555" stroke-width="0.6"/><g transform="translate(12,0)"><path d="M0.7,0.7 H5.5 L8.700000000000001,3.9 V22.7 H0.7 Z" fill="#fff" stroke="#555" stroke-width="1.4" stroke-linejoin="miter"/><path d="M5.2,0.7 L8.700000000000001,4.2 H5.2 Z" fill="#555" stroke="#555" stroke-width="0.6"/></g><path d="M2.6,11 H6.8 M2.6,15 H6.8 M14.6,11 H18.8 M14.6,15 H18.8" stroke="#f07d74" stroke-width="1.3"/></g></svg>
<svg style="position:absolute;left:1746px;top:1192px;overflow:visible;" width="12" height="6"><g transform="translate(0.7,0)"><path d="M0,0 H11 L5.5,5.6 Z" fill="#555"/></g></svg>
<svg style="position:absolute;left:1779px;top:1183px;overflow:visible;" width="24" height="24"><g transform="translate(0.8,0.2)"><circle cx="11.6" cy="11.6" r="10.8" fill="#fff" stroke="#666" stroke-width="1.5"/><path d="M5.8,11.6 H17.4" stroke="#666" stroke-width="3"/></g></svg>
<div class="a" style="left:1818px;top:1193px;width:120px;height:4px;background:#c9c9c9"></div>
<div class="a" style="left:1818px;top:1193px;width:54px;height:4px;background:#636363"></div>
<div class="a" style="left:1867.8px;top:1187.8px;width:13.4px;height:14px;border-radius:50%;background:#fff;border:1.3px solid #777"></div>
<svg style="position:absolute;left:1953px;top:1183px;overflow:visible;" width="24" height="24"><g transform="translate(0.2,0.2)"><circle cx="11.6" cy="11.6" r="10.8" fill="#fff" stroke="#666" stroke-width="1.5"/><path d="M5.8,11.6 H17.4 M11.6,5.8 V17.4" stroke="#555" stroke-width="2.6"/></g></svg>
<svg style="position:absolute;left:1998px;top:1184px;overflow:visible;" width="22" height="22"><path d="M0,0 H6 L0,6 Z M21.6,0 H15.6 L21.6,6 Z M0,22 H6 L0,16 Z M21.6,22 H15.6 L21.6,16 Z" fill="#5a5a5a"/><path d="M10.8,7.4 L14,11 L10.8,14.6 L7.6,11 Z" fill="#f07d74"/></svg>
<div class="t" style="left:54.15px;top:12.00px;font-size:17.2px;line-height:22px;color:#fff;letter-spacing:-0.751px;">PDF Agile</div>
<div class="t" style="left:264.64px;top:13.75px;font-size:16px;line-height:20px;color:#1c1c1c;letter-spacing:-0.240px;transform:scaleX(0.9952);">Start</div>
<div class="t" style="left:472.54px;top:13.75px;font-size:16px;line-height:20px;color:#111;letter-spacing:0.189px;transform:scaleX(0.9994);">ccertificate of completion t...</div>
<div class="t" style="left:1815.21px;top:13.00px;font-size:16.4px;line-height:20px;color:#fff;letter-spacing:-0.553px;transform:scaleX(0.9994);">Feedback</div>
<div class="t" style="left:24.87px;top:58.75px;font-size:16px;line-height:20px;color:#444;letter-spacing:-0.262px;transform:scaleX(1.0093);">File</div>
<div class="t" style="left:383.39px;top:57.50px;font-size:16px;line-height:20px;color:#444;letter-spacing:0.574px;transform:scaleX(0.9974);">Home</div>
<div class="t" style="left:477.89px;top:57.50px;font-size:16px;line-height:20px;color:#444;letter-spacing:0.067px;transform:scaleX(0.9936);">Insert</div>
<div class="t" style="left:568.64px;top:57.50px;font-size:16px;line-height:20px;color:#e8493e;letter-spacing:-0.075px;">Edit</div>
<div class="t" style="left:647.07px;top:57.50px;font-size:16px;line-height:20px;color:#444;letter-spacing:-0.214px;transform:scaleX(0.9982);">View</div>
<div class="t" style="left:731.52px;top:57.50px;font-size:16px;line-height:20px;color:#444;letter-spacing:0.313px;transform:scaleX(1.0046);">Comment</div>
<div class="t" style="left:852.92px;top:57.50px;font-size:16px;line-height:20px;color:#444;letter-spacing:0.134px;transform:scaleX(0.9965);">Convert</div>
<div class="t" style="left:959.54px;top:57.50px;font-size:16px;line-height:20px;color:#444;letter-spacing:-0.754px;transform:scaleX(0.9986);">Page</div>
<div class="t" style="left:1044.87px;top:57.50px;font-size:16px;line-height:20px;color:#444;letter-spacing:0.071px;transform:scaleX(1.0020);">Protect</div>
<div class="t" style="left:1146.38px;top:57.50px;font-size:16px;line-height:20px;color:#444;letter-spacing:0.063px;transform:scaleX(0.9989);">Signature</div>
<div class="t" style="left:1268.88px;top:58.00px;font-size:16px;line-height:20px;color:#a3a3a3;letter-spacing:-0.334px;transform:scaleX(0.9993);">Search and Replace</div>
<div class="t" style="left:1798.20px;top:58.75px;font-size:16px;line-height:20px;color:#444;letter-spacing:-0.336px;transform:scaleX(1.0006);">Use Redeem Code</div>
<div class="t" style="left:52.64px;top:103.00px;font-size:16px;line-height:20px;color:#c4c4c4;letter-spacing:0.120px;transform:scaleX(0.9985);">Hand</div>
<div class="t" style="left:52.88px;top:141.10px;font-size:16px;line-height:20px;color:#444;letter-spacing:-0.246px;transform:scaleX(1.0051);">Select</div>
<div class="t" style="left:155.52px;top:144.25px;font-size:16px;line-height:20px;color:#444;letter-spacing:-0.125px;transform:scaleX(1.0116);">Edit</div>
<div class="t" style="left:214.11px;top:144.00px;font-size:16px;line-height:20px;color:#444;letter-spacing:0.002px;">Add Text</div>
<div class="t" style="left:303.46px;top:144.00px;font-size:16px;line-height:20px;color:#444;letter-spacing:-0.135px;transform:scaleX(0.9993);">Add Images</div>
<div class="t" style="left:412.71px;top:144.25px;font-size:16px;line-height:20px;color:#444;letter-spacing:-0.351px;transform:scaleX(1.0006);">Add Shapes</div>
<div class="t" style="left:523.04px;top:145.50px;font-size:16px;line-height:20px;color:#444;letter-spacing:-0.845px;transform:scaleX(0.9984);">Eraser</div>
<div class="t" style="left:589.52px;top:145.50px;font-size:16px;line-height:20px;color:#444;letter-spacing:-0.578px;transform:scaleX(1.0032);">Batch Eraser</div>
<div class="t" style="left:701.21px;top:143.60px;font-size:16px;line-height:20px;color:#444;letter-spacing:-0.184px;transform:scaleX(1.0024);">Watermark</div>
<div class="t" style="left:806.64px;top:145.50px;font-size:16px;line-height:20px;color:#444;letter-spacing:0.034px;transform:scaleX(0.9872);">Link</div>
<div class="t" style="left:871.13px;top:143.60px;font-size:16px;line-height:20px;color:#444;letter-spacing:0.069px;transform:scaleX(0.9966);">Signature</div>
<div class="t" style="left:969.62px;top:145.50px;font-size:16px;line-height:20px;color:#444;letter-spacing:-0.563px;transform:scaleX(1.0020);">Page Labels</div>
<div class="t" style="left:1082.14px;top:145.50px;font-size:16px;line-height:20px;color:#444;letter-spacing:0.143px;">Header &amp; Footer</div>
<div class="t" style="left:1237.88px;top:143.90px;font-size:16px;line-height:20px;color:#444;letter-spacing:-0.593px;">Size</div>
<div class="t" style="left:1297.68px;top:143.60px;font-size:16px;line-height:20px;color:#444;letter-spacing:-0.343px;transform:scaleX(1.0011);">Organize Pages</div>
<div class="t" style="left:1434.09px;top:145.50px;font-size:16px;line-height:20px;color:#444;letter-spacing:-0.073px;transform:scaleX(0.9954);">Insert</div>
<div class="t" style="left:1499.62px;top:143.60px;font-size:16px;line-height:20px;color:#c4c4c4;letter-spacing:0.091px;transform:scaleX(1.0016);">Delete</div>
<div class="t" style="left:1573.92px;top:143.60px;font-size:16px;line-height:20px;color:#444;letter-spacing:-0.023px;transform:scaleX(0.9979);">Crop</div>
<div class="t" style="left:1636.63px;top:143.60px;font-size:16px;line-height:20px;color:#444;letter-spacing:-0.411px;transform:scaleX(1.0013);">Split Pages</div>
<div class="t" style="left:72.88px;top:187.40px;font-size:16.5px;line-height:21px;color:#444;letter-spacing:-0.086px;transform:scaleX(0.9961);">Thumbnail</div>
<div class="t" style="left:249.41px;top:438.60px;font-size:16px;line-height:20px;color:#444;transform:scaleX(0.8949);">1</div>
<div class="t" style="left:129.32px;top:1186.80px;font-size:15.6px;line-height:20px;color:#666;letter-spacing:0.172px;">Custom Size(297×210mm)</div>
<div class="t" style="left:1082.51px;top:1186.80px;font-size:15.6px;line-height:20px;color:#444;letter-spacing:0.362px;transform:scaleX(1.0096);">1 / 1</div>
<div class="t" style="left:1703.65px;top:1186.70px;font-size:15.6px;line-height:20px;color:#666;letter-spacing:-0.077px;transform:scaleX(0.9948);">94%</div>
</body></html>
